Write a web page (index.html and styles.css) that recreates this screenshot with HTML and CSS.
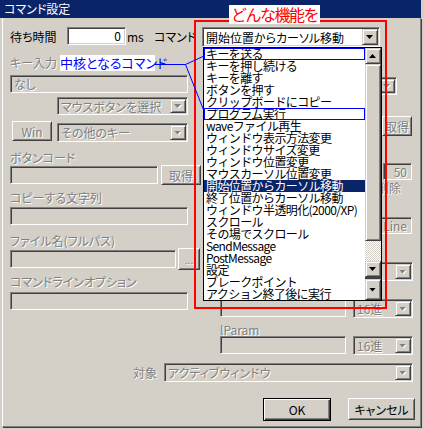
FILE: index.html
```html
<!DOCTYPE html>
<html lang="ja">
<head>
    <meta charset="UTF-8">
    <meta name="viewport" content="width=device-width, initial-scale=1.0">
    <title>コマンド設定</title>
    <link rel="stylesheet" href="styles.css">
</head>
<body>
<div class="window">
    <div class="titlebar">コマンド設定</div>
    <div class="frame">
        <div class="top-row">
            <span class="lbl wait-lbl">待ち時間</span>
            <div class="field white num wait">0</div>
            <span class="lbl ms-lbl">ms</span>
            <span class="lbl cmd-lbl">コマンド</span>
            <div class="combo white cmd"><span class="val">開始位置からカーソル移動</span><span class="arrow"></span></div>
        </div>

        <div class="columns">
            <div class="col-left">
                <div class="lbl dis key-lbl">キー入力</div>
                <div class="field dis key-field">なし</div>
                <div class="combo dis mouse"><span class="val">マウスボタンを選択</span><span class="arrow"></span></div>
                <div class="row win-row">
                    <div class="btn dis win">Win</div>
                    <div class="combo dis other"><span class="val">その他のキー</span><span class="arrow"></span></div>
                </div>
                <div class="lbl dis code-lbl">ボタンコード</div>
                <div class="row">
                    <div class="field dis code"></div>
                    <div class="btn dis get">取得</div>
                </div>
                <div class="lbl dis copy-lbl">コピーする文字列</div>
                <div class="field dis wide copy"></div>
                <div class="lbl dis file-lbl">ファイル名(フルパス)</div>
                <div class="row">
                    <div class="field dis path"></div>
                    <div class="btn dis browse">...</div>
                </div>
                <div class="lbl dis opt-lbl">コマンドラインオプション</div>
                <div class="field dis wide opt"></div>
            </div>

            <div class="col-right">
                <div class="combo dis r-combo"><span class="val"></span><span class="arrow"></span></div>
                <div class="btn dis r-get">取得</div>
                <div class="field dis num r-count">50</div>
                <div class="lbl dis r-del">削除</div>
                <div class="field dis num r-line">10 Line</div>
                <div class="row r-row1">
                    <div class="field dis param"></div>
                    <div class="combo dis radix"><span class="val">16進</span><span class="arrow"></span></div>
                </div>
                <div class="lbl dis r-param-lbl">wParam</div>
                <div class="row">
                    <div class="field dis param"></div>
                    <div class="combo dis radix"><span class="val">16進</span><span class="arrow"></span></div>
                </div>
                <div class="lbl dis r-param-lbl">lParam</div>
                <div class="row">
                    <div class="field dis param"></div>
                    <div class="combo dis radix"><span class="val">16進</span><span class="arrow"></span></div>
                </div>
            </div>
        </div>

        <div class="target-row">
            <span class="lbl dis target-lbl">対象</span>
            <div class="combo dis target"><span class="val">アクティブウィンドウ</span><span class="arrow"></span></div>
        </div>

        <div class="buttons">
            <div class="btn default ok">OK</div>
            <div class="btn cancel">キャンセル</div>
        </div>
    </div>

    <!-- opened command list -->
    <div class="droplist">
        <div class="items">
            <div class="item mark">キーを送る</div>
            <div class="item">キーを押し続ける</div>
            <div class="item">キーを離す</div>
            <div class="item">ボタンを押す</div>
            <div class="item">クリップボードにコピー</div>
            <div class="item mark">プログラム実行</div>
            <div class="item">waveファイル再生</div>
            <div class="item">ウィンドウ表示方法変更</div>
            <div class="item">ウィンドウサイズ変更</div>
            <div class="item">ウィンドウ位置変更</div>
            <div class="item">マウスカーソル位置変更</div>
            <div class="item sel">開始位置からカーソル移動</div>
            <div class="item">終了位置からカーソル移動</div>
            <div class="item">ウィンドウ半透明化(2000/XP)</div>
            <div class="item">スクロール</div>
            <div class="item">その場でスクロール</div>
            <div class="item">SendMessage</div>
            <div class="item">PostMessage</div>
            <div class="item">設定</div>
            <div class="item">ブレークポイント</div>
            <div class="item">アクション終了後に実行</div>
        </div>
        <div class="scrollbar">
            <div class="sb-btn up"></div>
            <div class="sb-btn thumb"></div>
            <div class="sb-track"></div>
            <div class="sb-btn down"></div>
            <div class="sb-gap"></div>
            <div class="sb-btn down last"></div>
        </div>
    </div>

    <!-- annotations -->
    <div class="red-box"></div>
    <div class="red-note">どんな機能を</div>
    <div class="blue-note">中核となるコマンド</div>
    <svg class="links" width="424" height="429">
        <path d="M155 64.5H185.5L204 56M185.5 64.5L204 111" fill="none" stroke="#0000ff" stroke-width="1"/>
    </svg>
</div>
</body>
</html>
```

FILE: styles.css
```css
body {
    margin: 0;
    font-family: "Noto Sans CJK JP", sans-serif;
    font-size: 12px;
    color: #000;
}
.window {
    position: relative;
    width: 424px;
    height: 429px;
    background: #d4d0c8;
    overflow: hidden;
}
.titlebar {
    box-sizing: border-box;
    width: 421px;
    height: 18px;
    padding-left: 4px;
    background: #0a246a;
    color: #fff;
    line-height: 18px;
    font-feature-settings: "palt";
}
.frame {
    box-sizing: border-box;
    width: 419px;
    height: 409px;
    margin-left: 2px;
    padding: 9px 0 0 7px;
    border-left: 1px solid #fff;
    border-right: 1px solid #808080;
    border-bottom: 1px solid #808080;
    box-shadow: 1px 1px 0 #404040;
}

/* common controls */
.lbl {
    display: block;
    height: 14px;
    line-height: 14px;
    white-space: nowrap;
    font-feature-settings: "palt";
}
.dis {
    color: #808080;
    text-shadow: 1px 1px 0 #fff;
}
.row {
    display: flex;
    align-items: flex-start;
}
.field, .combo {
    box-sizing: border-box;
    height: 18px;
    border: 1px solid;
    border-color: #808080 #fff #fff #808080;
    box-shadow: inset 1px 1px 0 #404040, inset -1px -1px 0 #d4d0c8;
    background: #d4d0c8;
    white-space: nowrap;
    overflow: hidden;
    font-feature-settings: "palt";
}
.field {
    line-height: 16px;
    padding: 0 3px;
}
.field.num {
    text-align: right;
    padding-right: 4px;
}
.white {
    background: #fff;
}
.combo {
    display: flex;
    padding: 1px;
}
.combo .val {
    flex: 1;
    display: flex;
    align-items: center;
    padding-left: 2px;
    overflow: hidden;
}
.arrow {
    position: relative;
    flex: none;
    width: 16px;
    box-sizing: border-box;
    border: 1px solid;
    border-color: #d4d0c8 #404040 #404040 #d4d0c8;
    box-shadow: inset 1px 1px 0 #fff, inset -1px -1px 0 #808080;
    background: #d4d0c8;
}
.arrow::after {
    content: "";
    position: absolute;
    left: 3px;
    top: calc(50% - 2px);
    width: 7px;
    height: 4px;
    background: #000;
    clip-path: polygon(0 0, 100% 0, 50% 100%);
}
.dis .arrow::before {
    content: "";
    position: absolute;
    left: 4px;
    top: calc(50% - 1px);
    width: 7px;
    height: 4px;
    background: #fff;
    clip-path: polygon(0 0, 100% 0, 50% 100%);
}
.dis .arrow::after {
    background: #808080;
}
.btn {
    box-sizing: border-box;
    display: flex;
    align-items: center;
    justify-content: center;
    border: 1px solid;
    border-color: #fff #404040 #404040 #fff;
    box-shadow: inset 1px 1px 0 #d4d0c8, inset -1px -1px 0 #808080;
    background: #d4d0c8;
    font-feature-settings: "palt";
}
.btn.default {
    border-color: #000;
    box-shadow: inset 1px 1px 0 #fff, inset -1px -1px 0 #404040, inset -2px -2px 0 #808080;
}

/* top row */
.top-row {
    display: flex;
    align-items: flex-start;
    height: 20px;
}
.top-row .lbl {
    height: 20px;
    line-height: 20px;
}
.wait-lbl { width: 57px; }
.wait { width: 59px; }
.ms-lbl { width: 28px; padding-left: 1px; box-sizing: border-box; }
.cmd-lbl { width: 48px; }
.cmd { width: 178px; height: 20px; }

/* two columns */
.columns {
    display: flex;
    align-items: flex-start;
}
.col-left {
    width: 191px;
    display: flex;
    flex-direction: column;
    align-items: flex-start;
}
.key-lbl { margin-top: 9px; }
.key-field { margin-top: 5px; width: 178px; }
.mouse { margin: 4px 0 0 47px; width: 131px; }
.win-row { margin-top: 6px; }
.win { margin-left: 2px; width: 40px; height: 20px; }
.other { margin: 2px 0 0 5px; width: 131px; height: 19px; }
.code-lbl { margin-top: 9px; }
.code { margin-top: 1px; width: 148px; }
.get { margin-left: 3px; width: 40px; height: 20px; }
.copy-lbl { margin-top: 6px; }
.wide { width: 178px; }
.copy { margin-top: 2px; }
.file-lbl { margin-top: 9px; }
.path { margin-top: 2px; width: 166px; }
.browse { margin-left: 2px; width: 22px; height: 22px; font-size: 10px; }
.opt-lbl { margin-top: 5px; }
.opt { margin-top: 3px; }

.col-right {
    margin-left: 19px;
    width: 194px;
    display: flex;
    flex-direction: column;
    align-items: flex-start;
}
.r-combo { margin-top: 30px; width: 177px; }
.r-get { margin: 21px 0 0 162px; width: 30px; height: 20px; }
.r-count { margin: 27px 0 0 163px; width: 29px; height: 17px; line-height: 15px; }
.r-del { margin: 1px 0 0 157px; }
.r-line { margin: 22px 0 0 130px; width: 62px; height: 17px; line-height: 15px; }
.r-row1 { margin-top: 28px; }
.r-param-lbl { margin-top: 5px; height: 13px; line-height: 13px; }
.param { width: 126px; }
.radix { margin-left: 7px; width: 60px; height: 19px; }

/* bottom */
.target-row {
    display: flex;
    margin-top: 8px;
    height: 19px;
}
.target-lbl { margin-left: 123px; width: 31px; height: 19px; line-height: 19px; }
.target { width: 249px; height: 19px; }
.buttons {
    display: flex;
    align-items: flex-start;
    margin-top: 16px;
}
.ok { margin-left: 253px; width: 68px; height: 23px; }
.cancel { margin-left: 17px; width: 67px; height: 22px; }

/* dropped list */
.droplist {
    position: absolute;
    left: 203px;
    top: 47px;
    width: 179px;
    height: 254px;
    box-sizing: border-box;
    border: 1px solid #000;
    background: #fff;
    display: flex;
}
.items {
    width: 161px;
}
.item {
    height: 12px;
    line-height: 12px;
    padding-left: 2px;
    font-size: 12px;
    letter-spacing: -0.6px;
    white-space: nowrap;
}
.item.sel {
    background: #0a246a;
    color: #fff;
}
.item.mark {
    outline: 1px solid #0000ff;
    outline-offset: -1px;
}
.scrollbar {
    width: 16px;
    display: flex;
    flex-direction: column;
}
.sb-btn {
    position: relative;
    box-sizing: border-box;
    height: 16px;
    border: 1px solid;
    border-color: #d4d0c8 #404040 #404040 #d4d0c8;
    box-shadow: inset 1px 1px 0 #fff, inset -1px -1px 0 #808080;
    background: #d4d0c8;
}
.sb-btn.thumb { height: 177px; }
.sb-btn.last { height: 21px; }
.sb-btn.up::after, .sb-btn.down::after {
    content: "";
    position: absolute;
    left: 3px;
    top: calc(50% - 2px);
    width: 7px;
    height: 4px;
    background: #000;
}
.sb-btn.up::after { clip-path: polygon(50% 0, 100% 100%, 0 100%); }
.sb-btn.down::after { clip-path: polygon(0 0, 100% 0, 50% 100%); }
.sb-track {
    height: 20px;
    background: repeating-conic-gradient(#fff 0 25%, #d4d0c8 0 50%) 0 0 / 2px 2px;
}
.sb-gap {
    height: 2px;
    background: #404040;
}

/* annotations */
.red-box {
    position: absolute;
    left: 194px;
    top: 20px;
    width: 193px;
    height: 289px;
    box-sizing: border-box;
    border: 2px solid #ff0000;
}
.red-note {
    position: absolute;
    left: 229px;
    top: 5px;
    width: 91px;
    height: 19px;
    background: #fff;
    color: #ff0000;
    font-size: 16px;
    line-height: 19px;
    letter-spacing: -1.5px;
    text-align: center;
}
.blue-note {
    position: absolute;
    left: 60px;
    top: 55px;
    width: 95px;
    height: 16px;
    background: #fff;
    color: #0000ff;
    font-size: 13px;
    line-height: 16px;
    text-align: center;
    white-space: nowrap;
    font-feature-settings: "palt";
}
.links {
    position: absolute;
    left: 0;
    top: 0;
}
```
